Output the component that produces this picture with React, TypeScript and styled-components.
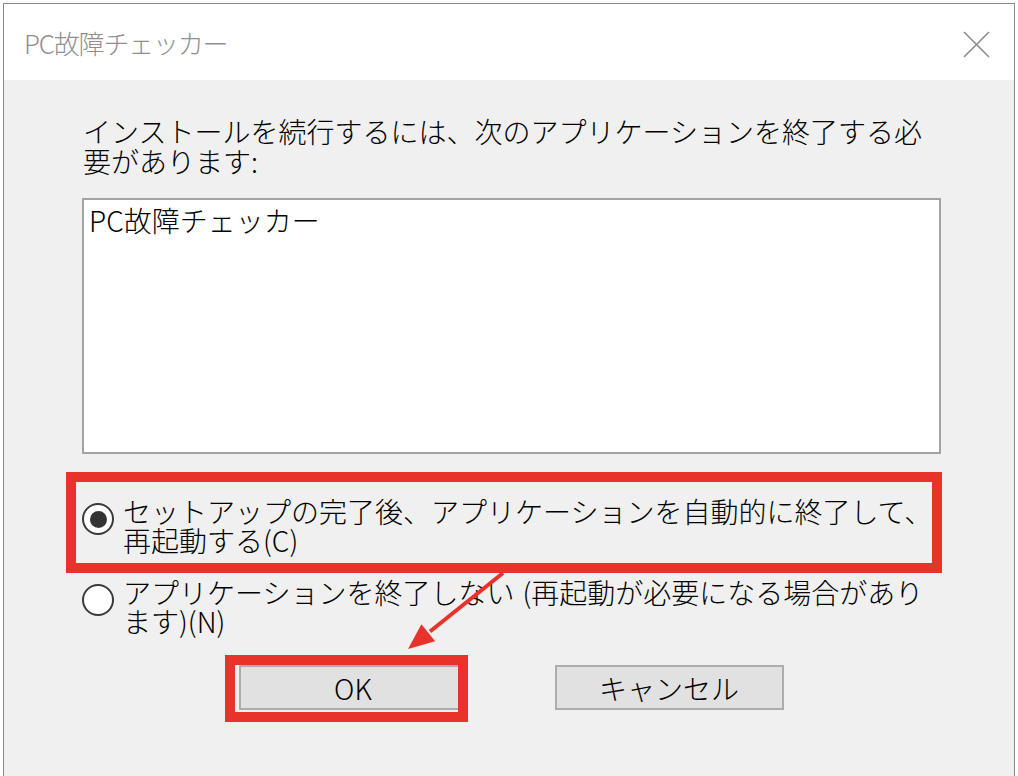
import React from "react";
import styled, { createGlobalStyle } from "styled-components";

const GlobalStyle = createGlobalStyle`
  html, body { margin: 0; padding: 0; background: #ffffff; }
  body { font-family: "Noto Sans CJK JP", "Noto Sans", sans-serif; }
  * { box-sizing: border-box; }
`;

const RED = "#e8332a";
const FONT = `"Noto Sans CJK JP", "Noto Sans", sans-serif`;

const Window = styled.div`
  margin: 3px 0 0 3px;
  width: 1012px;
  height: 773px;
  border: 1px solid #8a8a8a;
  border-bottom: none;
  display: flex;
  flex-direction: column;
  overflow: hidden;
`;

const TitleBar = styled.div`
  height: 76px;
  flex: none;
  background: #ffffff;
  display: flex;
  align-items: center;
  justify-content: space-between;
  padding: 0 24px 0 20px;
`;

const Title = styled.div`
  font-family: ${FONT};
  font-size: 26px;
  font-weight: 300;
  letter-spacing: -1.2px;
  color: #8f8f8f;
  line-height: 1;
  margin-top: 2px;
`;

const CloseButton = styled.div`
  width: 27px;
  height: 27px;
  display: flex;
  margin-top: 4px;
`;

const Body = styled.div`
  flex: 1;
  position: relative;
  background: #f0f0f0;
  padding: 36px 73px 0 78px;
  display: flex;
  flex-direction: column;
  font-family: ${FONT};
  font-size: 28px;
  font-weight: 300;
  color: #000;
`;

const Instruction = styled.div`
  line-height: 30px;
  padding-left: 1px;
  white-space: nowrap;
`;

const ListBox = styled.div`
  margin-top: 22px;
  height: 256px;
  background: #ffffff;
  border: 2px solid #a3a3a3;
  padding: 5px 5px;
`;

const ListItem = styled.div`
  line-height: 30px;
  white-space: nowrap;
`;

const RadioRow = styled.div<{ $gap: number }>`
  margin-top: ${(p) => p.$gap}px;
  display: flex;
  align-items: flex-start;
  gap: 9px;
`;

const RadioCircle = styled.div<{ $checked?: boolean }>`
  flex: none;
  width: 32px;
  height: 32px;
  margin-top: 6px;
  border-radius: 50%;
  border: 2px solid #3a3a3a;
  background: #ffffff;
  display: flex;
  align-items: center;
  justify-content: center;
  &::after {
    content: "";
    display: ${(p) => (p.$checked ? "block" : "none")};
    width: 17px;
    height: 17px;
    border-radius: 50%;
    background: #333333;
  }
`;

const RadioLabel = styled.div`
  line-height: 29px;
  white-space: nowrap;
`;

const Paren = styled.span`
  margin-left: 8px;
`;

const ButtonRow = styled.div`
  margin-top: 29px;
  display: flex;
  justify-content: center;
  gap: 87px;
  padding-right: 1px;
`;

const Button = styled.div`
  width: 229px;
  height: 45px;
  background: #e1e1e1;
  border: 2px solid #adadad;
  display: flex;
  align-items: center;
  justify-content: center;
  font-size: 28px;
  line-height: 1;
  color: #000;
`;

const Highlight = styled.div`
  position: absolute;
  border: 10px solid ${RED};
  pointer-events: none;
`;

const ArrowSvg = styled.svg`
  position: absolute;
  left: 396px;
  top: 485px;
  overflow: visible;
  pointer-events: none;
`;

export default function App() {
  return (
    <>
      <GlobalStyle />
      <Window>
        <TitleBar>
          <Title>PC故障チェッカー</Title>
          <CloseButton>
            <svg width="27" height="27" viewBox="0 0 27 27">
              <path d="M1 1 L26 26 M26 1 L1 26" stroke="#8c8c8c" strokeWidth="1.6" fill="none" />
            </svg>
          </CloseButton>
        </TitleBar>
        <Body>
          <Instruction>
            インストールを続行するには、次のアプリケーションを終了する必
            <br />
            要があります:
          </Instruction>
          <ListBox>
            <ListItem>PC故障チェッカー</ListItem>
          </ListBox>
          <RadioRow $gap={43}>
            <RadioCircle $checked />
            <RadioLabel>
              セットアップの完了後、アプリケーションを自動的に終了して、
              <br />
              再起動する(C)
            </RadioLabel>
          </RadioRow>
          <RadioRow $gap={23}>
            <RadioCircle />
            <RadioLabel>
              アプリケーションを終了しない<Paren>(再起動が必要になる場合があり</Paren>
              <br />
              ます)(N)
            </RadioLabel>
          </RadioRow>
          <ButtonRow>
            <Button>OK</Button>
            <Button>キャンセル</Button>
          </ButtonRow>

          <Highlight style={{ left: 62, top: 392, width: 876, height: 101 }} />
          <Highlight style={{ left: 221, top: 575, width: 243, height: 67 }} />
          <ArrowSvg width="110" height="90" viewBox="0 0 110 90">
            <line x1="103" y1="8" x2="30" y2="66.5" stroke={RED} strokeWidth="4" />
            <polygon points="8,84 35.2,76.3 21.4,59.2" fill={RED} />
          </ArrowSvg>
        </Body>
      </Window>
    </>
  );
}
